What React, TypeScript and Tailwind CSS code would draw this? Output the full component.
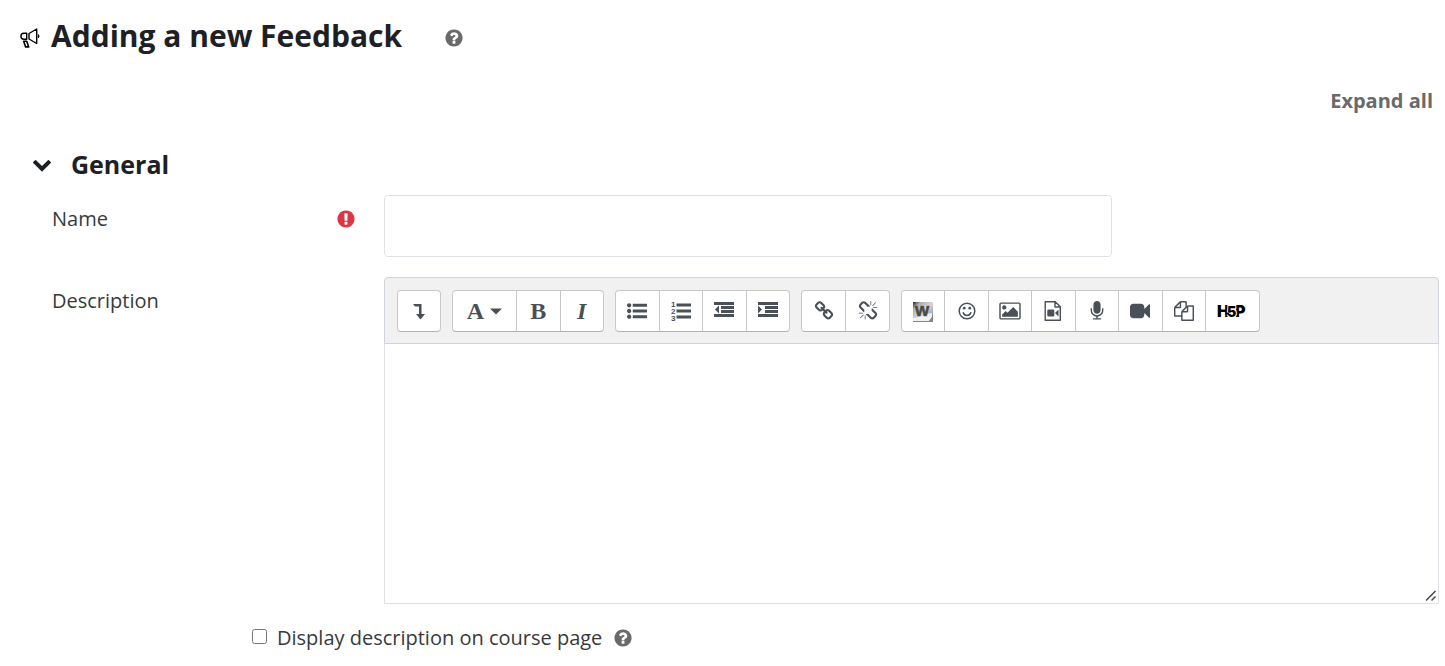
import type { ReactNode } from "react";
import { clsx } from "clsx";

interface GlyphProps {
  d: string;
  viewBox?: string;
  className?: string;
}

function Glyph({ d, viewBox = "0 0 1792 1792", className = "size-5" }: GlyphProps) {
  return (
    <svg viewBox={viewBox} className={className} fill="currentColor" aria-hidden="true">
      <path d={d} />
    </svg>
  );
}

const paths = {
  question:
    "M1024 1376v-192q0-14-9-23t-23-9h-192q-14 0-23 9t-9 23v192q0 14 9 23t23 9h192q14 0 23-9t9-23zm256-672q0-88-55.5-163t-138.5-116-170-41q-243 0-371 213-15 24 8 42l132 100q7 6 19 6 16 0 25-12 53-68 86-92 34-24 86-24 48 0 85.5 26t37.5 59q0 38-20 61t-68 45q-63 28-115.5 86.5t-52.5 125.5v36q0 14 9 23t23 9h192q14 0 23-9t9-23q0-19 21.5-49.5t54.5-49.5q32-18 49-28.5t46-35 44.5-48 28-60.5 12.5-81zm384 192q0 209-103 385.5t-279.5 279.5-385.5 103-385.5-103-279.5-279.5-103-385.5 103-385.5 279.5-279.5 385.5-103 385.5 103 279.5 279.5 103 385.5z",
  required:
    "M896 128q209 0 385.5 103t279.5 279.5 103 385.5-103 385.5-279.5 279.5-385.5 103-385.5-103-279.5-279.5-103-385.5 103-385.5 279.5-279.5 385.5-103zm128 1247v-190q0-14-9-23.5t-22-9.5h-192q-13 0-23 10t-10 23v190q0 13 10 23t23 10h192q13 0 22-9.5t9-23.5zm-2-344l18-621q0-12-10-18-10-8-24-8h-220q-14 0-24 8-10 6-10 18l17 621q0 10 10 17.5t24 7.5h185q14 0 23.5-7.5t10.5-17.5z",
  chevron:
    "M1683 808l-742 741q-19 19-45 19t-45-19l-742-741q-19-19-19-45.5t19-45.5l166-165q19-19 45-19t45 19l531 531 531-531q19-19 45-19t45 19l166 165q19 19 19 45.5t-19 45.5z",
  list:
    "M384 1408q0 80-56 136t-136 56-136-56-56-136 56-136 136-56 136 56 56 136zm0-512q0 80-56 136t-136 56-136-56-56-136 56-136 136-56 136 56 56 136zm1408 416v192q0 13-9.5 22.5t-22.5 9.5h-1216q-13 0-22.5-9.5t-9.5-22.5v-192q0-13 9.5-22.5t22.5-9.5h1216q13 0 22.5 9.5t9.5 22.5zm-1408-928q0 80-56 136t-136 56-136-56-56-136 56-136 136-56 136 56 56 136zm1408 416v192q0 13-9.5 22.5t-22.5 9.5h-1216q-13 0-22.5-9.5t-9.5-22.5v-192q0-13 9.5-22.5t22.5-9.5h1216q13 0 22.5 9.5t9.5 22.5zm0-512v192q0 13-9.5 22.5t-22.5 9.5h-1216q-13 0-22.5-9.5t-9.5-22.5v-192q0-13 9.5-22.5t22.5-9.5h1216q13 0 22.5 9.5t9.5 22.5z",
  link:
    "M1520 1216q0-40-28-68l-208-208q-28-28-68-28-42 0-72 32 3 3 19 18.5t21.5 21.5 15 19 13 25.5 3.5 27.5q0 40-28 68t-68 28q-15 0-27.5-3.5t-25.5-13-19-15-21.5-21.5-18.5-19q-33 31-33 73 0 40 28 68l206 207q27 27 68 27 40 0 68-26l147-146q28-28 28-67zm-703-705q0-40-28-68l-206-207q-28-28-68-28-39 0-68 27l-147 146q-28 28-28 67 0 40 28 68l208 208q27 27 68 27 42 0 72-31-3-3-19-18.5t-21.5-21.5-15-19-13-25.5-3.5-27.5q0-40 28-68t68-28q15 0 27.5 3.5t25.5 13 19 15 21.5 21.5 18.5 19q33-31 33-73zm895 705q0 120-85 203l-147 146q-83 83-203 83-121 0-204-85l-206-207q-83-83-83-203 0-123 88-209l-88-88q-86 88-208 88-120 0-204-84l-208-208q-84-84-84-204t85-203l147-146q83-83 203-83 121 0 204 85l206 207q83 83 83 203 0 123-88 209l88 88q86-88 208-88 120 0 204 84l208 208q84 84 84 204z",
  unlink:
    "M503 1271l-256 256q-10 9-23 9-12 0-23-9-9-10-9-23t9-23l256-256q10-9 23-9t23 9q9 10 9 23t-9 23zm169 41v320q0 14-9 23t-23 9-23-9-9-23v-320q0-14 9-23t23-9 23 9 9 23zm-224-224q0 14-9 23t-23 9h-320q-14 0-23-9t-9-23 9-23 23-9h320q14 0 23 9t9 23zm1264 128q0 120-85 203l-147 146q-83 83-203 83-121 0-204-85l-334-335q-21-21-42-56l239-18 273 274q28 28 68 27.5t68-27.5l147-146q28-28 28-67 0-40-28-68l-274-275 18-239q35 21 56 42l336 336q84 86 84 204zm-617-724l-239 18-273-274q-28-28-68-28-39 0-68 27l-147 146q-28 28-28 67 0 40 28 68l274 274-18 240q-35-21-56-42l-336-336q-84-86-84-204 0-120 85-203l147-146q83-83 203-83 121 0 204 85l334 335q21 21 42 56zm633 84q0 14-9 23t-23 9h-320q-14 0-23-9t-9-23 9-23 23-9h320q14 0 23 9t9 23zm-544-544v320q0 14-9 23t-23 9-23-9-9-23v-320q0-14 9-23t23-9 23 9 9 23zm407 151l-256 256q-11 9-23 9t-23-9q-9-10-9-23t9-23l256-256q10-9 23-9t23 9q9 10 9 23t-9 23z",
  picture:
    "M640 576q0 80-56 136t-136 56-136-56-56-136 56-136 136-56 136 56 56 136zm1024 384v448h-1408v-192l320-320 160 160 512-512zm96-704h-1600q-13 0-22.5 9.5t-9.5 22.5v1216q0 13 9.5 22.5t22.5 9.5h1600q13 0 22.5-9.5t9.5-22.5v-1216q0-13-9.5-22.5t-22.5-9.5zm160 32v1216q0 66-47 113t-113 47h-1600q-66 0-113-47t-47-113v-1216q0-66 47-113t113-47h1600q66 0 113 47t47 113z",
  microphone:
    "M1472 704v128q0 221-147.5 384.5t-364.5 187.5v132h256q26 0 45 19t19 45-19 45-45 19h-640q-26 0-45-19t-19-45 19-45 45-19h256v-132q-217-24-364.5-187.5t-147.5-384.5v-128q0-26 19-45t45-19 45 19 19 45v128q0 185 131.5 316.5t316.5 131.5 316.5-131.5 131.5-316.5v-128q0-26 19-45t45-19 45 19 19 45zm-256-384v512q0 132-94 226t-226 94-226-94-94-226v-512q0-132 94-226t226-94 226 94 94 226z",
  camera:
    "M1792 352v1088q0 42-39 59-13 5-25 5-27 0-45-19l-403-403v166q0 119-84.5 203.5t-203.5 84.5h-704q-119 0-203.5-84.5t-84.5-203.5v-704q0-119 84.5-203.5t203.5-84.5h704q119 0 203.5 84.5t84.5 203.5v165l403-402q18-19 45-19 12 0 25 5 39 17 39 59z",
  files:
    "M1696 384q40 0 68 28t28 68v1216q0 40-28 68t-68 28h-960q-40 0-68-28t-28-68v-288h-544q-40 0-68-28t-28-68v-672q0-40 20-88t48-76l408-408q28-28 76-48t88-20h416q40 0 68 28t28 68v328q68-40 128-40h416zm-544 213l-299 299h299v-299zm-640-384l-299 299h299v-299zm196 647l316-316v-416h-384v416q0 40-28 68t-68 28h-416v640h512v-256q0-40 20-88t48-76zm956 804v-1152h-384v416q0 40-28 68t-68 28h-416v640h896z",
};

function MegaphoneIcon() {
  return (
    <svg viewBox="0 0 20 20" className="mt-1 size-5 shrink-0 text-black" fill="none" stroke="currentColor" strokeWidth="1.4" strokeLinejoin="round" aria-hidden="true">
      <path d="M6.700 5.200H3.900a3 3 0 0 0 0 6h2.800zM9 5.500 16.700 1v14.500L9 11z" />
      <path d="M18.300 6.500q1.700 1.700 0 3.400z" fill="currentColor" strokeWidth=".8" />
      <path d="M3.700 13.300h3l2 5.600H5.600z" strokeWidth="1.600" />
    </svg>
  );
}

function HelpButton({ label, className }: { label: string; className?: string }) {
  return (
    <button type="button" aria-label={label} className={clsx("text-[#6a6a6a]", className)}>
      <Glyph d={paths.question} />
    </button>
  );
}

function IndentIcon({ outdent = false }: { outdent?: boolean }) {
  return (
    <svg viewBox="0 0 20 20" className="size-5" fill="currentColor" aria-hidden="true">
      <path d="M0 1h20v3H0zM7 5h13v3H7zM7 9h13v3H7zM0 13h20v3H0z" />
      <path d={outdent ? "M5 4.500v8L1 8.500z" : "M0 4.500v8l4-4z"} />
    </svg>
  );
}

function NumberedListIcon() {
  return (
    <svg viewBox="0 0 20 20" className="size-5 overflow-visible" fill="currentColor" aria-hidden="true">
      <path d="M5.500 2.500h14.500v3H5.500zM5.500 8.500h14.500v3H5.500zM5.500 14.500h14.500v3H5.500z" />
      <g fontFamily="Liberation Sans" fontWeight="700" fontSize="8">
        <text x="0" y="6">1</text>
        <text x="0" y="13">2</text>
        <text x="0" y="20">3</text>
      </g>
    </svg>
  );
}

function SmileIcon() {
  return (
    <svg viewBox="0 0 20 20" className="size-5" fill="none" stroke="currentColor" strokeWidth="1.5" aria-hidden="true">
      <circle cx="10" cy="10" r="7.800" />
      <path d="M6.300 11.800a3.900 3.900 0 0 0 7.400 0" strokeLinecap="round" />
      <circle cx="7.200" cy="7.200" r="1.400" fill="currentColor" stroke="none" />
      <circle cx="12.800" cy="7.200" r="1.400" fill="currentColor" stroke="none" />
    </svg>
  );
}

function FileVideoIcon() {
  return (
    <svg viewBox="0 0 20 20" className="size-5" fill="currentColor" aria-hidden="true">
      <path d="M2.200.7h10l5.100 5.100v13.500H2.200zM12 .7V6h5.300" fill="none" stroke="currentColor" strokeWidth="1.400" strokeLinejoin="round" />
      <rect x="4.300" y="8.500" width="7" height="7" rx="1.200" />
      <path d="m12 12 3.500-3.500v7z" />
    </svg>
  );
}

function WordIcon() {
  return (
    <svg viewBox="0 0 20 20" className="mt-0.5 size-5 overflow-visible" aria-hidden="true">
      <defs>
        <linearGradient id="word-bg" x1="0" y1="0" x2="1" y2="1">
          <stop offset="0" stopColor="#222" />
          <stop offset=".2" stopColor="#b0b0b0" />
          <stop offset=".5" stopColor="#d6d6d6" />
          <stop offset=".75" stopColor="#aaa" />
          <stop offset="1" stopColor="#333" />
        </linearGradient>
      </defs>
      <rect width="20" height="20" fill="url(#word-bg)" />
      <path d="M0 16q5 0 8-2l6-2 5-1v4l-3 4H0z" fill="#f2f2f2" />
      <path d="M0 19h16l4-4v5H0z" fill="#888" />
      <text x="9" y="14" textAnchor="middle" fontFamily="Liberation Sans" fontWeight="700" fontSize="15" fill="#4a4a4a" stroke="#4a4a4a" strokeWidth=".6">W</text>
    </svg>
  );
}

function H5PIcon() {
  return (
    <svg viewBox="0 0 30 20" className="h-5 w-[30px] overflow-visible" fontFamily="Inter" fontWeight="900" aria-hidden="true">
      <text x="0" y="16" fontSize="16">H</text>
      <text x="18" y="16" fontSize="16">P</text>
      <text x="10" y="16" fontSize="14" stroke="#fff" strokeWidth="2" paintOrder="stroke">5</text>
      <path d="M8 11.500h4v2H9z" />
    </svg>
  );
}

interface Tool {
  label: string;
  icon: ReactNode;
  width?: string;
}

interface ToolGroup {
  width: string;
  tools: Tool[];
}

const toolGroups: ToolGroup[] = [
  {
    width: "w-11",
    tools: [
      {
        label: "Show more buttons",
        icon: <Glyph viewBox="0 0 20 20" d="M4 3h8.500v10H16l-4.500 5.500L7 13h3V5.500H6z" />,
      },
    ],
  },
  {
    width: "w-[152px]",
    tools: [
      {
        label: "Paragraph styles",
        width: "w-16",
        icon: (
          <>
            <span className="font-['Liberation_Serif',serif] text-2xl font-bold">A</span>
            <Glyph viewBox="0 0 12 7" d="M0 .5h12l-6 6z" className="h-[7px] w-3" />
          </>
        ),
      },
      { label: "Bold", icon: <span className="font-['Liberation_Serif',serif] text-2xl font-bold">B</span> },
      { label: "Italic", icon: <span className="font-['Liberation_Serif',serif] text-2xl font-bold italic">I</span> },
    ],
  },
  {
    width: "w-[175px]",
    tools: [
      { label: "Unordered list", icon: <Glyph d={paths.list} /> },
      { label: "Ordered list", icon: <NumberedListIcon /> },
      { label: "Outdent", icon: <IndentIcon outdent /> },
      { label: "Indent", icon: <IndentIcon /> },
    ],
  },
  {
    width: "w-[89px]",
    tools: [
      { label: "Link", icon: <Glyph d={paths.link} /> },
      { label: "Unlink", icon: <Glyph d={paths.unlink} /> },
    ],
  },
  {
    width: "w-[359px]",
    tools: [
      { label: "Import Word file", icon: <WordIcon /> },
      { label: "Emoji picker", icon: <SmileIcon /> },
      { label: "Insert or edit image", icon: <Glyph d={paths.picture} viewBox="0 0 1920 1792" className="h-5 w-[22px]" /> },
      { label: "Insert or edit an audio/video file", icon: <FileVideoIcon /> },
      { label: "Record audio", icon: <Glyph d={paths.microphone} /> },
      { label: "Record video", icon: <Glyph d={paths.camera} /> },
      { label: "Manage files", icon: <Glyph d={paths.files} /> },
      { label: "Insert H5P", icon: <H5PIcon />, width: "w-[53px]" },
    ],
  },
];

function Toolbar() {
  return (
    <div role="toolbar" aria-label="Editor" className="flex flex-wrap gap-[11px] rounded-t border border-[#ced4da] bg-[#f1f1f1] p-3 pb-[11px]">
      {toolGroups.map((group) => (
        <div
          key={group.tools[0].label}
          className={clsx(
            "flex h-[42px] divide-x divide-[#c8c8c8] rounded border border-[#c8c8c8] border-b-[#b3b3b3] bg-white",
            group.width
          )}
        >
          {group.tools.map((tool) => (
            <button
              key={tool.label}
              type="button"
              aria-label={tool.label}
              className={clsx("flex items-center justify-center gap-1.5 text-[#495057]", tool.width ?? "flex-1")}
            >
              {tool.icon}
            </button>
          ))}
        </div>
      ))}
    </div>
  );
}

export default function App() {
  return (
    <main className="min-h-screen bg-white pt-4 pr-1.5 pb-3 pl-5 font-['Open_Sans',sans-serif] text-xl text-[#373a3c]">
      <header className="flex items-center">
        <MegaphoneIcon />
        <h1 className="mr-[42px] ml-[11px] text-[30px] leading-10 font-bold text-[#1d2125]">Adding a new Feedback</h1>
        <HelpButton label="Help with Feedback" className="mt-1" />
      </header>

      <div className="mt-[30px] flex justify-end pr-1.5">
        <a href="#general" className="leading-[30px] font-bold text-[#6a6a6a]">Expand all</a>
      </div>

      <form id="general">
        <h2 className="mt-7 flex items-center gap-[19px] pl-3 text-[25px] leading-10 font-bold text-[#1d2125]">
          <button type="button" aria-label="Collapse General">
            <Glyph d={paths.chevron} />
          </button>
          General
        </h2>

        <div className="mt-[11px] flex items-start pl-8">
          <div className="flex w-[332px] shrink-0 items-center justify-between pt-2.5 pr-7">
            <label htmlFor="name">Name</label>
            <span className="text-[#dc3545]">
              <Glyph d={paths.required} />
            </span>
          </div>
          <div className="flex-1">
            <input id="name" type="text" required className="h-[62px] w-[69%] rounded border border-[#dee2e6] px-3" />
          </div>
        </div>

        <div className="mt-5 flex items-start pl-8">
          <label htmlFor="description" className="w-[332px] shrink-0 pt-2.5">Description</label>
          <div className="relative flex-1">
            <Toolbar />
            <textarea id="description" className="block h-[260px] w-full resize-none border border-t-0 border-[#dee2e6] p-3" />
            {/* Resize grip */}
            <svg viewBox="0 0 12 12" className="absolute right-0.5 bottom-0.5 size-3 cursor-ns-resize" stroke="#444" strokeWidth="1.5" aria-hidden="true">
              <path d="M1 10.500 10.500 1M6.500 10.500l4-4" />
            </svg>
          </div>
        </div>

        <div className="mt-5 flex items-center pl-[232px]">
          <input id="show-description" type="checkbox" className="mb-1 size-[15px]" />
          <label htmlFor="show-description" className="mr-[11px] ml-2.5">Display description on course page</label>
          <HelpButton label="Help with Display description on course page" />
        </div>
      </form>
    </main>
  );
}
